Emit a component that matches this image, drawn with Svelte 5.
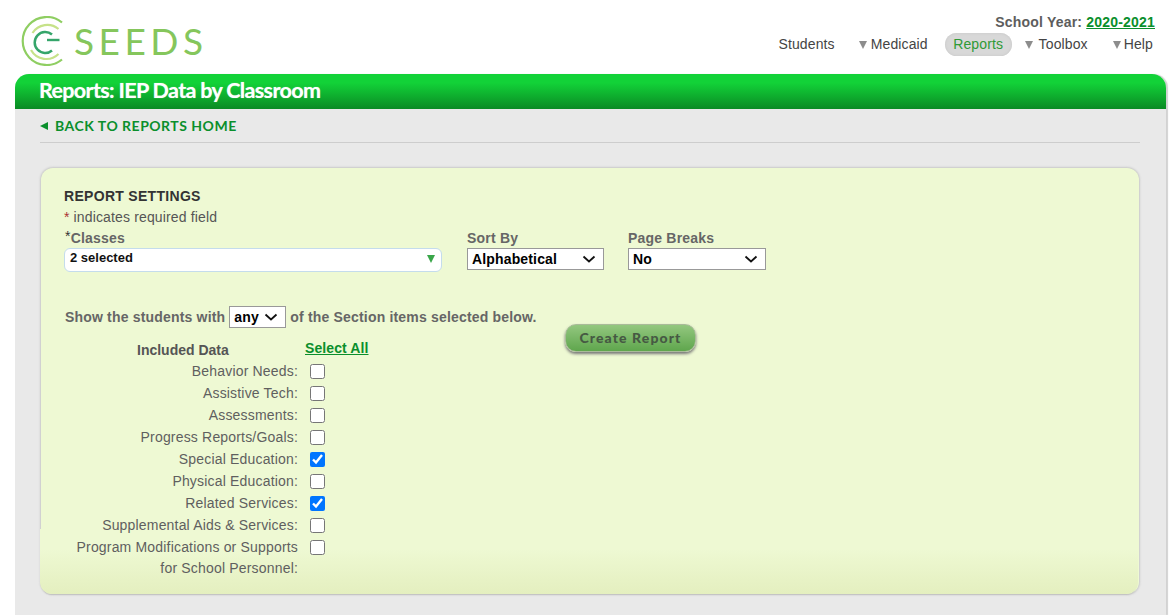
<script>
	const items = [
		{ label: "Behavior Needs:", on: false },
		{ label: "Assistive Tech:", on: false },
		{ label: "Assessments:", on: false },
		{ label: "Progress Reports/Goals:", on: false },
		{ label: "Special Education:", on: true },
		{ label: "Physical Education:", on: false },
		{ label: "Related Services:", on: true },
		{ label: "Supplemental Aids & Services:", on: false },
		{ label: "Program Modifications or Supports for School Personnel:", on: false },
	];
</script>

<div class="header">
	<div class="logo">
		<svg width="50" height="50" viewBox="0 0 50 50" fill="none">
			<path d="M41 6.500A24 24 0 1 0 41 43.500" stroke="#8fce62" stroke-width="2.200" />
			<path d="M11.500 17A17.500 17.500 0 0 1 37.500 13M37.500 38A17.500 17.500 0 0 1 10 34" stroke="#c6e289" stroke-width="2.200" />
			<path d="M31 18.500A10.500 10.500 0 1 0 31 34.500" stroke="#35a56a" stroke-width="2.500" />
			<path d="M26 24H38.500" stroke="#35a56a" stroke-width="2.400" />
		</svg>
		<span class="wordmark">SEEDS</span>
	</div>
	<div class="headRight">
		<div class="year">School Year: <a href="#top">2020-2021</a></div>
		<nav>
			<span class="navItem">Students</span>
			<span class="navItem drop medicaid">Medicaid</span>
			<span class="navItem active">Reports</span>
			<span class="navItem drop toolbox">Toolbox</span>
			<span class="navItem drop help">Help</span>
		</nav>
	</div>
</div>

<div class="panel">
	<h1>Reports: IEP Data by Classroom</h1>
	<div class="body">
		<div class="back"><span class="backArrow"></span><a href="#top">BACK TO REPORTS HOME</a></div>

		<div class="card">
			<div class="cardInner">
				<h2>REPORT SETTINGS</h2>
				<div class="req"><span class="star">*</span> indicates required field</div>

				<div class="fields">
					<div class="field classes">
						<div class="lbl"><span class="reqMark">*</span>Classes</div>
						<div class="multi"><span>2 selected</span><i></i></div>
					</div>
					<div class="field sort">
						<div class="lbl">Sort By</div>
						<select><option>Alphabetical</option></select>
					</div>
					<div class="field breaks">
						<div class="lbl">Page Breaks</div>
						<select class="wider"><option>No</option></select>
					</div>
				</div>

				<div class="showLine">
					Show the students with
					<select><option>any</option></select>
					of the Section items selected below.
				</div>

				<div class="lower">
					<div class="data">
						<div class="dataHead">
							<span class="inc">Included Data</span>
							<a href="#top">Select All</a>
						</div>
						{#each items as item}
							<label class="row">
								<span class="rowText">{item.label}</span>
								<input type="checkbox" checked={item.on} />
							</label>
						{/each}
					</div>
					<button>Create Report</button>
				</div>
			</div>
		</div>
	</div>
</div>

<style>
	:global(body) {
		background: #fff;
		font-family: "Liberation Sans", Arial, sans-serif;
		font-size: 14px;
		color: #555;
		overflow: hidden;
	}

	.header {
		height: 74px;
		display: flex;
		justify-content: space-between;
		padding: 0 21px 0 21px;
	}

	.logo {
		display: flex;
		align-items: center;
		gap: 3px;
		height: 50px;
		margin-top: 16px;
	}

	.wordmark {
		font-family: Lato, sans-serif;
		font-weight: 400;
		font-size: 37px;
		letter-spacing: 4.5px;
		color: #85c65c;
		line-height: 50px;
	}

	.headRight {
		display: flex;
		flex-direction: column;
		align-items: flex-end;
		padding-top: 15px;
	}

	.year {
		font-weight: bold;
		font-size: 14px;
		line-height: 15px;
		letter-spacing: 0.2px;
		color: #5d5d5d;
	}

	.year a {
		color: #0a8f2c;
	}

	nav {
		display: flex;
		align-items: center;
		margin: 3px 2px 0 0;
	}

	.navItem {
		color: #444;
		line-height: 23px;
		letter-spacing: 0.12px;
	}

	.drop::before {
		content: "";
		display: inline-block;
		border-left: 4.5px solid transparent;
		border-right: 4.5px solid transparent;
		border-top: 8px solid #8d8d8d;
		vertical-align: 0;
	}

	.medicaid {
		margin-left: 24px;
	}

	.medicaid::before {
		margin-right: 4px;
	}

	.toolbox {
		margin-left: 13px;
	}

	.toolbox::before {
		margin-right: 6px;
	}

	.help {
		margin-left: 25px;
	}

	.help::before {
		margin-right: 3px;
	}

	.active {
		color: #2f9a36;
		background: #d8d8d8;
		margin-left: 17px;
		padding: 0 8.5px;
		border-radius: 12px;
		box-shadow: inset 0 0 3px #c6c6c6;
	}

	.panel {
		margin-left: 15px;
		width: 1151px;
		background: #e9e9e9;
		box-shadow: 2px 0 1px #d2d2d2;
		border-radius: 14px 14px 0 0;
		height: 541px;
	}

	h1 {
		margin: 0;
		height: 35px;
		line-height: 33px;
		padding-left: 24px;
		border-radius: 14px 14px 0 0;
		background: linear-gradient(#12d238, #12d238 25%, #0a8a24);
		color: #fff;
		font-family: Lato, sans-serif;
		font-size: 21.5px;
		font-weight: 700;
		letter-spacing: -0.65px;
		text-shadow: 0 0 1px rgba(255, 255, 255, 0.6);
	}

	.body {
		padding: 0 26px 0 25px;
	}

	.back {
		height: 33px;
		border-bottom: 1px solid #cdcdcd;
		display: flex;
		align-items: center;
		gap: 7px;
	}

	.backArrow {
		border-top: 4px solid transparent;
		border-bottom: 4px solid transparent;
		border-right: 8px solid #0a8f2c;
	}

	.back a {
		font-family: Lato, sans-serif;
		font-weight: 700;
		font-size: 14px;
		letter-spacing: 0.5px;
		color: #0a8f2c;
		text-decoration: none;
	}

	.card {
		position: relative;
		margin: 25px 1px 0;
		height: 426px;
		border-radius: 12px;
		background: #eef9d3;
		box-shadow: 0 0 2px 1px #c9c9c9;
	}

	/* bottom strip of the card sits 1px further left than the top */
	.card::after {
		content: "";
		position: absolute;
		left: -1px;
		right: 1px;
		bottom: 0;
		height: 65px;
		border-radius: 0 0 12px 12px;
		background: linear-gradient(#eef9d3, #eef9d3 30%, #e4efbf);
		box-shadow: 0 2px 1px -1px #c2c2c2;
	}

	.cardInner {
		position: relative;
		z-index: 1;
		padding: 20px 23px 0;
	}

	h2 {
		margin: 0;
		font-size: 14px;
		line-height: 16px;
		letter-spacing: 0.3px;
		color: #333;
	}

	.req {
		margin-top: 5px;
		line-height: 16px;
		letter-spacing: 0.14px;
		color: #555;
	}

	.star {
		color: #a33;
	}

	.fields {
		display: flex;
		margin-top: 5px;
	}

	.lbl {
		font-weight: bold;
		line-height: 16px;
		letter-spacing: 0.2px;
		color: #666;
	}

	.reqMark {
		position: relative;
		top: -2px;
		margin-left: 1px;
		font-weight: normal;
		color: #333;
	}

	.classes {
		width: 403px;
	}

	.sort {
		width: 161px;
	}

	.multi {
		width: 378px;
		height: 24px;
		box-sizing: border-box;
		margin-top: 2px;
		padding: 1px 5px 0;
		border: 1px solid #c4dcec;
		border-radius: 6px;
		background: #fff;
		display: flex;
		justify-content: space-between;
		font-size: 13px;
		font-weight: bold;
		line-height: 16px;
		color: #111;
	}

	.multi i {
		margin: 5px 1px 0 0;
		border-left: 4px solid transparent;
		border-right: 4px solid transparent;
		border-top: 8px solid #3aa64a;
		height: 0;
	}

	select {
		display: block;
		box-sizing: border-box;
		width: 137px;
		height: 22px;
		margin-top: 2px;
		padding: 0 0 0 4px;
		appearance: none;
		border-radius: 0;
		background: #fff url("data:image/svg+xml,%3Csvg xmlns='http://www.w3.org/2000/svg' width='14' height='8'%3E%3Cpath d='M1.500 1.500L7 6.500L12.500 1.500' fill='none' stroke='%23111' stroke-width='1.800'/%3E%3C/svg%3E") no-repeat right 7px center;
		border: 1px solid #999;
		font-family: "Liberation Sans", Arial, sans-serif;
		font-size: 14px;
		font-weight: bold;
		letter-spacing: 0.15px;
		color: #000;
	}

	select.wider {
		width: 138px;
	}

	.showLine {
		display: flex;
		align-items: center;
		gap: 4px;
		margin: 34px 0 0 1px;
		font-weight: bold;
		letter-spacing: 0.18px;
		color: #666;
	}

	.showLine select {
		width: 57px;
		margin: 0;
	}

	.lower {
		display: flex;
		align-items: flex-start;
	}

	.data {
		width: 305px;
		margin-top: 10px;
	}

	.dataHead {
		display: flex;
		height: 22px;
	}

	.inc {
		width: 241px;
		padding-left: 73px;
		box-sizing: border-box;
		font-weight: bold;
		margin-top: 4px;
		color: #555;
	}

	.dataHead a {
		font-weight: bold;
		letter-spacing: 0.1px;
		margin-top: 2px;
		height: 16px;
		color: #0a8f2c;
	}

	.row {
		display: grid;
		grid-template-columns: 234px 16px;
		column-gap: 12px;
		min-height: 22px;
		line-height: 22px;
		text-align: right;
		color: #5f5f5f;
	}

	.rowText {
		line-height: 21px;
		padding-top: 1px;
		letter-spacing: 0.18px;
	}

	input[type="checkbox"] {
		width: 15px;
		height: 15px;
		margin: 4px 0 0;
	}

	button {
		margin: -4px 0 0 196px;
		width: 131px;
		height: 28px;
		padding: 0 0 2px;
		border: 1px solid #a9bb99;
		border-radius: 11px;
		background: linear-gradient(#93c77f, #5fa64d);
		box-shadow: 0 2px 3px #777;
		font-family: Lato, sans-serif;
		font-size: 14px;
		font-weight: 900;
		letter-spacing: 1.1px;
		color: #465943;
	}
</style>
